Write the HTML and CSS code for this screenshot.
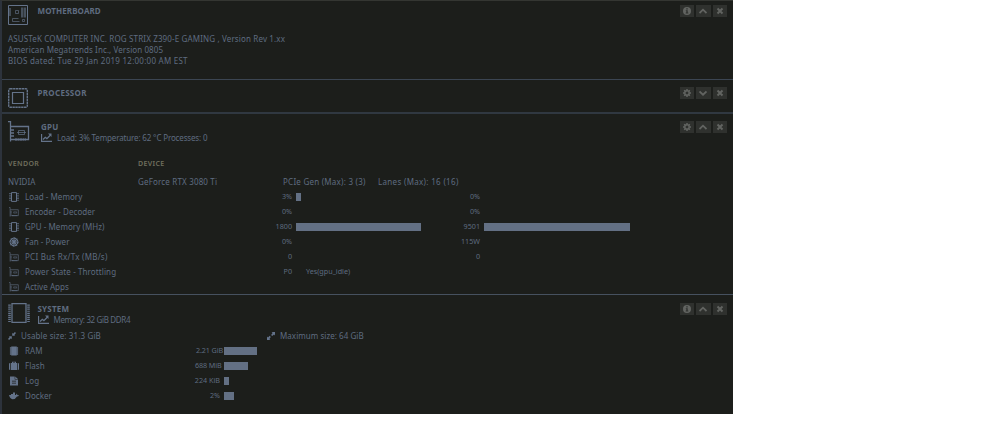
FILE: index.html
```
<!DOCTYPE html>
<html lang="en">
<head>
<meta charset="utf-8">
<title>Dashboard</title>
<link rel="stylesheet" href="styles.css">
</head>
<body>
<svg class="defs" width="0" height="0">
  <symbol id="info" viewBox="0 0 8 8"><path fill-rule="evenodd" d="M4 0a4 4 0 1 0 0 8a4 4 0 0 0 0-8zM3.3 1.2h1.4v1.2H3.3zM2.8 3.2h1.9v2.3h.6v1H2.7v-1h.6V4.1h-.5z"/></symbol>
  <symbol id="gear" viewBox="0 0 8 8"><circle cx="4" cy="4" r="2.200" fill="none" stroke="currentColor" stroke-width="1.500"/><path d="M4 0v1.500M4 6.500V8M0 4h1.500M6.500 4H8M1.200 1.200l1 1M5.800 5.800l1 1M6.800 1.200l-1 1M2.200 5.800l-1 1" fill="none" stroke="currentColor" stroke-width="1.500"/></symbol>
  <symbol id="up" viewBox="0 0 8 8"><path d="M.5 6L4 2.700L7.500 6" fill="none" stroke="currentColor" stroke-width="1.800"/></symbol>
  <symbol id="down" viewBox="0 0 8 8"><path d="M.5 2.400L4 5.700L7.500 2.400" fill="none" stroke="currentColor" stroke-width="1.800"/></symbol>
  <symbol id="close" viewBox="0 0 8 8"><path d="M1.500 1.500l5 5M6.500 1.500l-5 5" fill="none" stroke="currentColor" stroke-width="2"/></symbol>
  <symbol id="board" viewBox="0 0 20 20"><g fill="none" stroke="currentColor"><path d="M.5.5h19v19H.5z"/><path d="M7.500 5.500h3v3h-3zM14.500 14.500h2v2h-2zM10.500 13.500h-6v3h7" stroke-width=".8" opacity=".8"/><path d="M2 3v8" stroke-width="1.500" opacity=".7"/></g><path d="M13 2.500h2.500v10H13zM16 2.500h2v10h-2z" opacity=".6"/></symbol>
  <symbol id="cpu" viewBox="0 0 20 20"><g fill="none" stroke="currentColor"><rect x=".7" y=".7" width="18.600" height="18.600" rx="1.500" stroke-width="1.400" stroke-dasharray="2.400 .5"/><path d="M4.500 4.500h11v11h-11z" stroke-width="1.200"/></g></symbol>
  <symbol id="card" viewBox="0 0 22 21"><g fill="none" stroke="currentColor"><path d="M0 .5h2.500v20M3 5.500h17.500v13H3" stroke-width="1.300"/><path d="M3 9h3M3 12h3M3 15h3" stroke-width="1.500"/><path d="M10.500 9.500h6v4h-6zM9 11.500h9" opacity=".7"/><path d="M7 18.500h11" stroke-width="2" stroke-dasharray="2 .5"/></g></symbol>
  <symbol id="chip" viewBox="0 0 22 20"><g fill="none" stroke="currentColor"><path d="M4 .7h14v18.600H4z" stroke-width="1.300"/><path d="M1.500 1.500v18M20.500 1.500v18" stroke-width="2.600" stroke-dasharray="1.200 .85"/></g></symbol>
  <symbol id="memchip" viewBox="0 0 10 10"><g fill="none" stroke="currentColor"><path d="M2.500 .6h5v8.800h-5z"/><path d="M1 1v8M9 1v8" stroke-dasharray="1 .7" stroke-width="1.300"/></g></symbol>
  <symbol id="chart" viewBox="0 0 11 9"><path d="M.5 1v7.500H11M2 6.500l2.300-2.200 1.600 1.300L9.500 2" fill="none" stroke="currentColor" stroke-width="1.300"/><path d="M7 .5h3.500V4z"/></symbol>
  <symbol id="fan" viewBox="0 0 10 10"><path d="M5 .3v9.400M.3 5h9.400M1.700 1.700l6.600 6.600M8.300 1.700l-6.600 6.600" fill="none" stroke="currentColor" stroke-width="1.200"/><circle cx="5" cy="5" r="3.800" fill="none" stroke="currentColor" stroke-width="1.200" stroke-dasharray="2 .95"/></symbol>
  <symbol id="compress" viewBox="0 0 8 8"><path d="M4.200 3.800V.8l.9.900L6.900 0 8 1.100 6.300 2.900l.9.900zM3.800 4.200v3l-.9-.9L1.100 8 0 6.900l1.700-1.800-.9-.9z"/></symbol>
  <symbol id="expand" viewBox="0 0 8 8"><path d="M8 0v3.500L7 2.500 5.200 4.100l-1.100-1.100L5.600 1.100 4.600 0zM0 8V4.500l1 1 1.700-1.700 1.100 1.100L2.400 6.900l1 1.100z"/></symbol>
  <symbol id="ram" viewBox="0 0 10 10"><path d="M2.200.5h5.600v9H2.200z"/><path d="M1.700 1.200v7.800M8.300 1.200v7.800" fill="none" stroke="currentColor" stroke-width="1.600" stroke-dasharray="1.500 .5"/></symbol>
  <symbol id="case" viewBox="0 0 10 10"><path d="M0 3Q0 2 1 2v7Q0 9 0 8zM10 3Q10 2 9 2v7q1 0 1-1zM1.700 2H3V.7h4V2h1.300v7H1.700zM4 1.500V2h2v-.5z" fill-rule="evenodd"/></symbol>
  <symbol id="log" viewBox="0 0 10 10"><path fill-rule="evenodd" d="M1 .5h4.700v3H9v6H1zM6.200.5L9 3H6.200zM3 4.700v.7h4v-.7zM3 6.700v.7h4v-.7z"/></symbol>
  <symbol id="whale" viewBox="0 0 10 10"><path d="M0 4h2V3h2V1.500h2V4h1l.5-1.500 1 1.400L10 4.200Q9.500 5.500 8 5.500 6.500 8.300 3.500 8.200 1 8 0 4z"/></symbol>
</svg>
<main class="panel">
  <section class="tile motherboard">
    <header class="head">
      <svg class="logo"><use href="#board"/></svg>
      <div class="titles"><h2>MOTHERBOARD</h2></div>
      <nav class="tools"><span><svg><use href="#info"/></svg></span><span><svg><use href="#up"/></svg></span><span><svg><use href="#close"/></svg></span></nav>
    </header>
    <div class="details">
      <p class="model">ASUSTeK COMPUTER INC. ROG STRIX Z390-E GAMING , Version Rev 1.xx</p>
      <p class="maker">American Megatrends Inc., Version 0805</p>
      <p class="bios">BIOS dated: Tue 29 Jan 2019 12:00:00 AM EST</p>
    </div>
  </section>
  <section class="tile processor">
    <header class="head">
      <svg class="logo"><use href="#cpu"/></svg>
      <div class="titles"><h2>PROCESSOR</h2></div>
      <nav class="tools"><span><svg><use href="#gear"/></svg></span><span><svg><use href="#down"/></svg></span><span><svg><use href="#close"/></svg></span></nav>
    </header>
  </section>
  <section class="tile gpu">
    <header class="head">
      <svg class="logo wide"><use href="#card"/></svg>
      <div class="titles"><h2>GPU</h2><p class="sub"><svg><use href="#chart"/></svg><span class="load">Load: 3% Temperature: 62 °C Processes: 0</span></p></div>
      <nav class="tools"><span><svg><use href="#gear"/></svg></span><span><svg><use href="#up"/></svg></span><span><svg><use href="#close"/></svg></span></nav>
    </header>
    <div class="device captions"><span>VENDOR</span><span>DEVICE</span></div>
    <div class="device"><span class="vendor">NVIDIA</span><span class="name">GeForce RTX 3080 Ti</span><span class="pcie">PCIe Gen (Max): 3 (3)</span><span class="lanes">Lanes (Max): 16 (16)</span></div>
    <div class="row"><svg><use href="#memchip"/></svg><span>Load - Memory</span><b>3%</b><i style="width:5px"></i><b>0%</b></div>
    <div class="row"><svg><use href="#card"/></svg><span>Encoder - Decoder</span><b>0%</b><em></em><b>0%</b></div>
    <div class="row"><svg><use href="#memchip"/></svg><span>GPU - Memory (MHz)</span><b>1800</b><i style="width:125px"></i><b>9501</b><i style="width:146px"></i></div>
    <div class="row"><svg><use href="#fan"/></svg><span>Fan - Power</span><b>0%</b><em></em><b>115W</b></div>
    <div class="row"><svg><use href="#card"/></svg><span class="bus">PCI Bus Rx/Tx (MB/s)</span><b>0</b><em></em><b>0</b></div>
    <div class="row"><svg><use href="#card"/></svg><span class="state">Power State - Throttling</span><b class="pstate">P0</b><em class="idle">Yes(gpu_idle)</em></div>
    <div class="row"><svg><use href="#card"/></svg><span>Active Apps</span></div>
  </section>
  <section class="tile system">
    <header class="head">
      <svg class="logo wide chip"><use href="#chip"/></svg>
      <div class="titles"><h2>SYSTEM</h2><p class="sub"><svg><use href="#chart"/></svg><span class="memory">Memory: 32 GiB DDR4</span></p></div>
      <nav class="tools"><span><svg><use href="#info"/></svg></span><span><svg><use href="#up"/></svg></span><span><svg><use href="#close"/></svg></span></nav>
    </header>
    <div class="sizes"><p><svg><use href="#compress"/></svg><span class="usable">Usable size: 31.3 GiB</span></p><p><svg><use href="#expand"/></svg><span class="maximum">Maximum size: 64 GiB</span></p></div>
    <div class="row usage"><svg><use href="#ram"/></svg><span>RAM</span><b class="full">2.21 GiB</b><i style="width:33px"></i></div>
    <div class="row usage"><svg><use href="#case"/></svg><span>Flash</span><b class="mid">688 MiB</b><i style="width:24px"></i></div>
    <div class="row usage"><svg><use href="#log"/></svg><span>Log</span><b>224 KiB</b><i style="width:5px"></i></div>
    <div class="row usage"><svg><use href="#whale"/></svg><span>Docker</span><b>2%</b><i style="width:10px"></i></div>
  </section>
</main>
</body>
</html>
```
FILE: styles.css
```
* { box-sizing: border-box; }
body { margin: 0; background: #fff; }
h2, p { margin: 0; }
.defs { display: block; }
svg { fill: currentColor; flex: none; }
.panel {
  width: 733px; height: 414px; overflow: hidden;
  background: #1c1e1b; color: #5f6c80;
  border-left: 2px solid #2d333c; border-top: 1px solid #343632;
  font: 8px/11px "Noto Sans", sans-serif; white-space: nowrap;
}
.tile { padding: 0 6px 0 6px; border-bottom: 1px solid #3b4552; }
.motherboard { height: 79px; padding-top: 4px; }
.processor { height: 34px; padding-top: 7px; border-bottom: 2px solid #303841; }
.gpu { height: 181px; padding-top: 7px; border-bottom-color: #46515f; }
.system { height: 119px; padding-top: 8px; border: 0; }
.head { display: flex; align-items: flex-start; }
.logo { width: 20px; height: 20px; color: #64738a; }
.processor .logo { margin-top: 1px; }
.logo.wide { width: 22px; height: 21px; }
.logo.chip { height: 20px; }
.titles { margin-left: 9.500px; flex: 1; }
.gpu .titles { margin-left: 11px; }
.system .titles { margin-left: 7.500px; }
h2 { font-size: 8px; line-height: 11px; letter-spacing: .1px; font-weight: 700; }
.processor h2 { letter-spacing: .3px; }
.gpu h2 { letter-spacing: .3px; }
.system h2 { letter-spacing: .2px; }
.sub { display: flex; align-items: center; line-height: 11px; }
.sub svg { width: 11px; height: 9px; margin-right: 5px; color: #64738a; }
.load { letter-spacing: -.15px; }
.memory { letter-spacing: -.35px; }
.tools { display: flex; gap: 2px; }
.tools span { width: 14.500px; height: 12px; background: #2f312e; color: #626461; display: flex; align-items: center; justify-content: center; }
.tools svg { width: 8px; height: 8px; }
.details { margin-top: 8px; }
.model { letter-spacing: .14px; }
.maker { letter-spacing: .09px; }
.bios { letter-spacing: .25px; }
.device { display: flex; height: 16px; align-items: center; }
.device span:nth-child(1) { width: 130px; }
.device span:nth-child(2) { width: 145px; }
.device span:nth-child(3) { width: 95px; }
.name { letter-spacing: .17px; }
.pcie { letter-spacing: .24px; }
.lanes { letter-spacing: .32px; }
.captions { margin-top: 10px; height: 20px; font-size: 7px; color: #706f5e; font-weight: 600; letter-spacing: .35px; }
.row { display: grid; grid-template-columns: 17px 220px 47px 4px 147px 37px 4px 160px; height: 15px; align-items: center; }
.row svg { width: 10px; height: 10px; margin-left: 1px; grid-column: 1; color: #64738a; }
.row span { letter-spacing: .05px; }
.row .bus { letter-spacing: .25px; }
.row .state { letter-spacing: .1px; }
.row b { font-size: 7.200px; font-weight: 400; text-align: right; grid-column: 3; }
.row i { height: 8px; background: #637084; grid-column: 5; }
.row em { font-style: normal; font-size: 7.200px; grid-column: 5; }
.row b ~ b { grid-column: 6; }
.row b ~ b ~ i { grid-column: 8; }
.row .idle { padding-left: 10px; }
.row .idle, .row .pstate { margin-top: -1px; }
.sizes { display: flex; height: 15px; align-items: center; margin-top: 3px; }
.sizes p { width: 259px; display: flex; align-items: center; }
.sizes svg { width: 8px; height: 8px; margin-right: 5px; color: #64738a; }
.usable { letter-spacing: .13px; }
.maximum { letter-spacing: .05px; }
.usage { grid-template-columns: 17px 158px 37px 4px 200px; }
.row .full { margin-right: -3px; letter-spacing: -.1px; }
.row .mid { margin-right: -1.500px; letter-spacing: -.1px; }
```
